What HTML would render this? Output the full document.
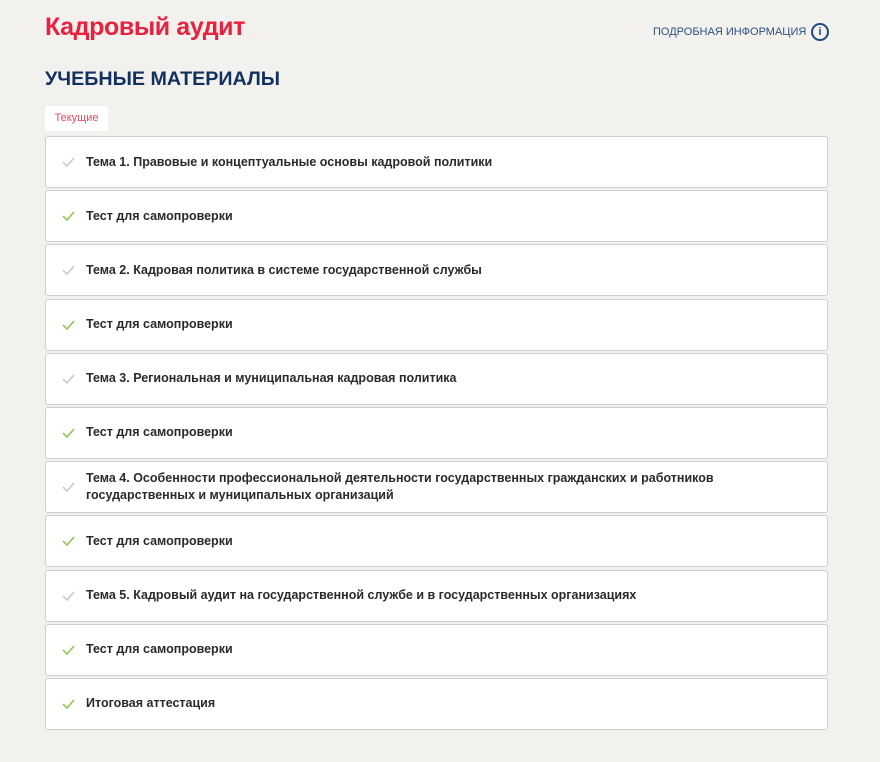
<!DOCTYPE html>
<html><head><meta charset="utf-8"><style>
body{margin:0;background:#f2f1ee;font-family:"Liberation Sans",sans-serif;width:880px;height:762px;overflow:hidden;position:relative}
.t{position:absolute;left:45px;top:13px;font-size:25px;color:#e8213f;font-weight:bold;letter-spacing:-0.4px}
.info{position:absolute;left:653px;top:26px;font-size:11px;color:#2d5080;letter-spacing:0}
.ic{position:absolute;left:811px;top:23px;width:14px;height:14px;border:2px solid #1f4a7e;border-radius:50%;color:#1f4a7e;font-size:11px;font-weight:bold;text-align:center;line-height:14px}
.h{position:absolute;left:45px;top:68px;font-size:19.7px;font-weight:bold;color:#13315f}
.tab{position:absolute;left:45px;top:106px;width:63px;height:25px;background:#fff;border-radius:3px 3px 0 0;color:#e8495f;font-size:11px;text-align:center;line-height:25px}
.list{position:absolute;left:45px;top:136px;width:783px}
.r{box-sizing:border-box;height:52px;border:1px solid #cfcfcf;border-radius:3px;background:#fff;margin-bottom:2.2px;display:flex;align-items:center;padding-left:40px;position:relative;font-size:12.5px;font-weight:bold;color:#2a2a2a;line-height:17px}
.r svg{position:absolute;left:16px;top:50%;margin-top:-5px}
</style></head><body>
<div class="t">Кадровый аудит</div>
<div class="info">ПОДРОБНАЯ ИНФОРМАЦИЯ</div>
<div class="ic">i</div>
<div class="h">УЧЕБНЫЕ МАТЕРИАЛЫ</div>
<div class="tab">Текущие</div>
<div class="list">
<div class="r"><svg width="13" height="10"><path d="M1 5l4 4 7-8" fill="none" stroke="#c8c8c8" stroke-width="1.5"/></svg>Тема 1. Правовые и концептуальные основы кадровой политики</div>
<div class="r"><svg width="13" height="10"><path d="M1 5l4 4 7-8" fill="none" stroke="#8bc34a" stroke-width="1.5"/></svg>Тест для самопроверки</div>
<div class="r"><svg width="13" height="10"><path d="M1 5l4 4 7-8" fill="none" stroke="#c8c8c8" stroke-width="1.5"/></svg>Тема 2. Кадровая политика в системе государственной службы</div>
<div class="r"><svg width="13" height="10"><path d="M1 5l4 4 7-8" fill="none" stroke="#8bc34a" stroke-width="1.5"/></svg>Тест для самопроверки</div>
<div class="r"><svg width="13" height="10"><path d="M1 5l4 4 7-8" fill="none" stroke="#c8c8c8" stroke-width="1.5"/></svg>Тема 3. Региональная и муниципальная кадровая политика</div>
<div class="r"><svg width="13" height="10"><path d="M1 5l4 4 7-8" fill="none" stroke="#8bc34a" stroke-width="1.5"/></svg>Тест для самопроверки</div>
<div class="r"><svg width="13" height="10"><path d="M1 5l4 4 7-8" fill="none" stroke="#c8c8c8" stroke-width="1.5"/></svg>Тема 4. Особенности профессиональной деятельности государственных гражданских и работников<br>государственных и муниципальных организаций</div>
<div class="r"><svg width="13" height="10"><path d="M1 5l4 4 7-8" fill="none" stroke="#8bc34a" stroke-width="1.5"/></svg>Тест для самопроверки</div>
<div class="r"><svg width="13" height="10"><path d="M1 5l4 4 7-8" fill="none" stroke="#c8c8c8" stroke-width="1.5"/></svg>Тема 5. Кадровый аудит на государственной службе и в государственных организациях</div>
<div class="r"><svg width="13" height="10"><path d="M1 5l4 4 7-8" fill="none" stroke="#8bc34a" stroke-width="1.5"/></svg>Тест для самопроверки</div>
<div class="r"><svg width="13" height="10"><path d="M1 5l4 4 7-8" fill="none" stroke="#8bc34a" stroke-width="1.5"/></svg>Итоговая аттестация</div>
</div>
</body></html>
